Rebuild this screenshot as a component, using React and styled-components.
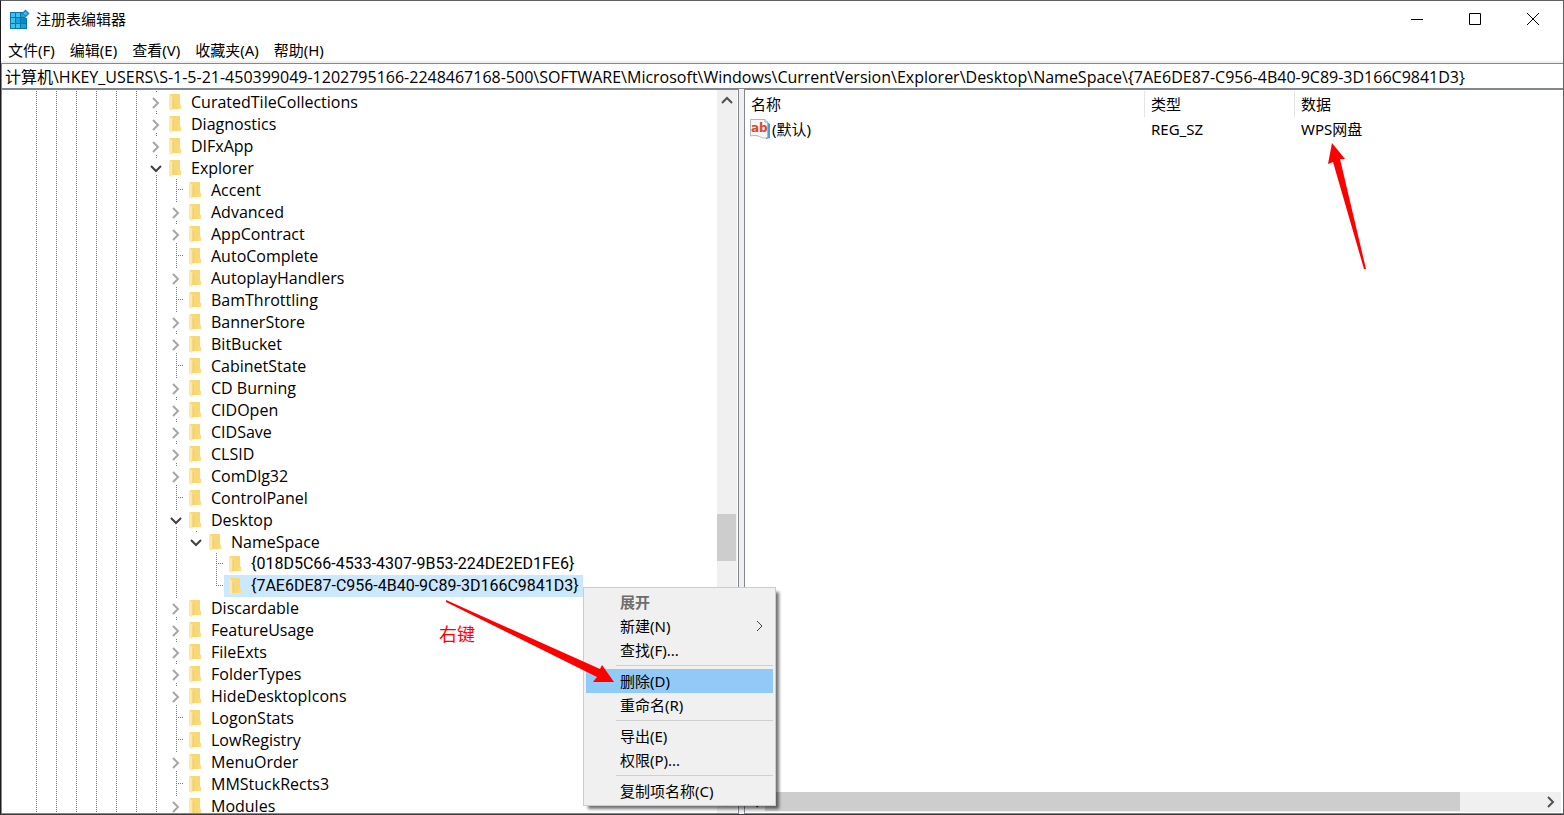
import React from "react";
import styled, { createGlobalStyle, css } from "styled-components";

const GlobalStyle = createGlobalStyle`
  * { box-sizing: border-box; }
  html, body { margin: 0; }
  body, button, input, table {
    font-family: "Noto Sans", "Noto Sans CJK SC", sans-serif;
    font-size: 15px;
    line-height: 22px;
    color: #000;
  }
  button, input { border: 0; padding: 0; margin: 0; background: none; outline: none; }
`;

const Window = styled.div`
  position: relative;
  display: flex;
  flex-direction: column;
  height: 100vh;
  overflow: hidden;
  background: #fff;
  border: 1px solid #606065;
  border-left-color: #1c1a1f;
  border-bottom-color: #3c3c40;
`;

const TitleBar = styled.header`
  display: flex;
  align-items: center;
  flex: none;
  height: 37px;
  padding: 0 1px 2px 8px;
`;

const Title = styled.h1`
  flex: 1;
  margin: 0 0 0 6px;
  font-size: 15px;
  font-weight: 400;
`;

const CaptionButton = styled.button`
  display: flex;
  align-items: center;
  justify-content: center;
  width: 58px;
  height: 35px;
`;

const MenuBar = styled.nav`
  display: flex;
  gap: 15px;
  flex: none;
  height: 25px;
  padding: 1px 7px 0;
  border-bottom: 2px solid #f0f0f0;
`;

const AddressInput = styled.input`
  flex: none;
  width: 100%;
  height: 26px;
  padding: 0 3px 1px;
  font-family: "Open Sans", "Noto Sans CJK SC", sans-serif;
  font-size: 16px;
  border: 1px solid #828790;
  border-right: 0;
`;

const Panes = styled.main`
  display: flex;
  flex: 1;
  min-height: 0;
  background: #f0f0f0;
`;

const Pane = styled.section`
  display: flex;
  min-width: 0;
  min-height: 0;
  background: #fff;
  border: 1px solid #828790;
`;

const TreePane = styled(Pane)`
  flex: 0 0 738px;
  padding-right: 1px;
  margin-right: 5px;
`;

const ListPane = styled(Pane)`
  flex: 1;
  flex-direction: column;
  padding: 1px 2px 1px 0;
  border-right: 0;
`;

const Tree = styled.ul`
  flex: 1;
  min-width: 0;
  margin: 0;
  padding: 1px 0 0 22px;
  overflow: hidden;
  list-style: none;
`;

const TreeRow = styled.li`
  display: flex;
  height: 22px;
`;

const dotsDown = "repeating-linear-gradient(to bottom, #777 0 1px, transparent 1px 2px)";
const dotsAcross = "repeating-linear-gradient(to right, #777 0 1px, transparent 1px 2px)";

const guides = {
  none: css``,
  line: css`
    background: ${dotsDown} 12px 0 / 1px 22px no-repeat;
  `,
  leaf: css`
    background: ${dotsDown} 12px 0 / 1px 22px no-repeat, ${dotsAcross} 14px 10px / 6px 1px no-repeat;
  `,
  last: css`
    background: ${dotsDown} 12px 0 / 1px 11px no-repeat, ${dotsAcross} 14px 10px / 6px 1px no-repeat;
  `,
  closed: css`
    background: ${dotsDown} 12px 0 / 1px 2px no-repeat, ${dotsDown} 12px 20px / 1px 2px no-repeat;
  `,
  open: css`
    background: ${dotsDown} 12px 0 / 1px 2px no-repeat, ${dotsDown} 12px 18px / 1px 4px no-repeat;
  `,
  openLast: css`
    background: ${dotsDown} 12px 0 / 1px 2px no-repeat;
  `,
};

const Guide = styled.span`
  flex: none;
  width: 20px;
  height: 22px;
  ${(p) => guides[p.$kind]}
`;

const Expander = styled.button`
  display: flex;
  align-items: center;
  justify-content: center;
  width: 20px;
  height: 22px;
  padding: 1px 0 0 4px;
`;

const NodeButton = styled.button`
  display: flex;
  align-items: center;
  gap: 10px;
  height: 22px;
  padding: 0 4px 0 5px;
  font-family: ${(p) => (p.$classId ? "Roboto" : '"Open Sans"')}, "Noto Sans CJK SC", sans-serif;
  font-size: 16px;
  white-space: nowrap;
  background: ${(p) => (p.$selected ? "#cce8ff" : "transparent")};
`;

const ScrollBar = styled.div`
  display: flex;
  flex: none;
  flex-direction: ${(p) => (p.$vertical ? "column" : "row")};
  ${(p) => (p.$vertical ? "width" : "height")}: 20px;
  background: #f0f0f0;
`;

const ScrollTrack = styled.div`
  display: flex;
  flex: 1;
  min-height: 0;
  flex-direction: inherit;
`;

const Spacer = styled.div`
  flex: ${(p) => p.$grow};
`;

const VThumb = styled.div`
  height: 47px;
  margin-right: 1px;
  background: #cdcdcd;
`;

const HThumb = styled.div`
  flex: 696;
  margin-bottom: 1px;
  background: #cdcdcd;
`;

const ScrollButton = styled.button`
  display: flex;
  flex: none;
  align-items: center;
  justify-content: center;
  width: 20px;
  height: 20px;
`;

const ListArea = styled.div`
  flex: 1;
  min-height: 0;
`;

const ValueTable = styled.table`
  width: 100%;
  table-layout: fixed;
  border-collapse: separate;
  border-spacing: 0;
`;

const HeadCell = styled.th`
  width: ${(p) => p.$width || "auto"};
  height: 26px;
  padding: 0 6px;
  font-weight: 400;
  text-align: left;
  border-right: ${(p) => (p.$width ? "1px solid #e5e5e5" : "0")};
`;

const Cell = styled.td`
  height: 24px;
  padding: 0 6px;
`;

const NameCell = styled(Cell)`
  padding: 0 5px;
`;

const ValueName = styled.span`
  display: flex;
  align-items: center;
  gap: 2px;
`;

const ContextMenu = styled.div`
  position: absolute;
  top: 586px;
  left: 582px;
  width: 193px;
  padding: 2px;
  background: #f0f0f0;
  border: 1px solid #ccc;
  box-shadow: 4px 4px 3px -1px rgba(0, 0, 0, 0.55);
`;

const MenuItem = styled.button`
  display: flex;
  align-items: center;
  justify-content: space-between;
  width: 100%;
  height: 24px;
  padding: 0 9px 1px 34px;
  font-weight: ${(p) => (p.disabled ? 700 : 400)};
  color: ${(p) => (p.disabled ? "#6d6d6d" : "#000")};
  background: ${(p) => (p.$active ? "#91c9f7" : "transparent")};
`;

const Separator = styled.hr`
  height: 1px;
  margin: 3px 0 3px 30px;
  border: 0;
  background: #d0d0d0;
`;

const Annotations = styled.svg`
  position: absolute;
  top: 0;
  left: 0;
  pointer-events: none;
`;

const Note = styled.span`
  position: absolute;
  top: 621px;
  left: 438px;
  font-size: 18px;
  line-height: 24px;
  color: #f00;
`;

const RegistryIcon = () => (
  <svg width="21" height="20" viewBox="0 0 21 20" aria-hidden="true">
    <path d="M1 3h17v17H1z" fill="#0a76a8" />
    <path d="M2 4h4v4H2zM7 4h4v4H7zM2 9h4v5H2zM2 15h4v4H2zM7 15h4v4H7z" fill="#3fc1f0" />
    <path d="M12 4h3v4h-3zM7 9h4v5H7zM12 15h5v4h-5z" fill="#17a2de" />
    <path d="M12 9h5v5h-5z" fill="#0d88c0" />
    <path d="M14 2h6v7h-3l-3-3z" fill="#fff" />
    <path d="M16.500 .5l4 4-4 4-4-4z" fill="#1787bd" />
    <path d="M16.500 2.500l2 2-2 2-2-2z" fill="#4fbce6" />
  </svg>
);

const FolderIcon = () => (
  <svg width="12" height="17" viewBox="0 0 12 17" aria-hidden="true">
    <path d="M1 0h10v10l1 2v3H2z" fill="#f8d775" />
    <path d="M9 11h3v4H9z" fill="#fbdc83" />
    <path d="M0 0l3 2.500 1 2V15l-1 2-3-1.500z" fill="#ffe8a6" />
    <path d="M4 4v11" stroke="#edc95f" />
  </svg>
);

const StringIcon = () => (
  <svg width="20" height="20" viewBox="0 0 20 20" aria-hidden="true">
    <path d="M16 2l4 3v14l-4 1z" fill="#4a9fd8" />
    <path d="M.5.500H15l2.500 2.500v15c-3 2-5 1-8-.5s-6-1-9-.5z" fill="#f5f5f5" stroke="#b5b5b5" />
    <path d="M15 .5V3h2.500" fill="#fff" stroke="#9aa5ad" />
    <text x="1" y="13" fontFamily="DejaVu Sans" fontWeight="700" fontSize="12" fill="#db4b2d">ab</text>
  </svg>
);

const chevrons = {
  right: { w: 8, h: 12, d: "M1 1l5 5-5 5" },
  down: { w: 12, h: 8, d: "M1 1l5 5 5-5" },
  up: { w: 12, h: 8, d: "M1 7l5-5 5 5" },
  left: { w: 8, h: 12, d: "M7 1L2 6l5 5" },
};

const Chevron = ({ dir, color, weight = 2 }) => {
  const c = chevrons[dir];
  return (
    <svg width={c.w} height={c.h} viewBox={`0 0 ${c.w} ${c.h}`} aria-hidden="true">
      <path d={c.d} fill="none" stroke={color} strokeWidth={weight} />
    </svg>
  );
};

const lines = (n) => Array(n).fill("line");

const explorerKeys = (entries) =>
  entries.map(([name, kind]) => ({ name, kind, guides: lines(7) }));

const nodes = [
  { name: "CuratedTileCollections", guides: lines(6), kind: "closed" },
  { name: "Diagnostics", guides: lines(6), kind: "closed" },
  { name: "DIFxApp", guides: lines(6), kind: "closed" },
  { name: "Explorer", guides: lines(6), kind: "open" },
  ...explorerKeys([
    ["Accent", "leaf"],
    ["Advanced", "closed"],
    ["AppContract", "closed"],
    ["AutoComplete", "leaf"],
    ["AutoplayHandlers", "closed"],
    ["BamThrottling", "leaf"],
    ["BannerStore", "closed"],
    ["BitBucket", "closed"],
    ["CabinetState", "leaf"],
    ["CD Burning", "closed"],
    ["CIDOpen", "closed"],
    ["CIDSave", "closed"],
    ["CLSID", "closed"],
    ["ComDlg32", "closed"],
    ["ControlPanel", "leaf"],
    ["Desktop", "open"],
  ]),
  { name: "NameSpace", guides: lines(8), kind: "openLast" },
  { name: "{018D5C66-4533-4307-9B53-224DE2ED1FE6}", guides: [...lines(8), "none"], kind: "leaf", classId: true },
  {
    name: "{7AE6DE87-C956-4B40-9C89-3D166C9841D3}",
    guides: [...lines(8), "none"],
    kind: "last",
    classId: true,
    selected: true,
  },
  ...explorerKeys([
    ["Discardable", "closed"],
    ["FeatureUsage", "closed"],
    ["FileExts", "closed"],
    ["FolderTypes", "closed"],
    ["HideDesktopIcons", "closed"],
    ["LogonStats", "leaf"],
    ["LowRegistry", "leaf"],
    ["MenuOrder", "closed"],
    ["MMStuckRects3", "leaf"],
    ["Modules", "closed"],
  ]),
];

const TreeNode = ({ node }) => {
  const opened = node.kind.startsWith("open");
  const expandable = opened || node.kind === "closed";
  return (
    <TreeRow role="treeitem" aria-selected={!!node.selected} aria-expanded={expandable ? opened : undefined}>
      {node.guides.map((kind, i) => (
        <Guide key={i} $kind={kind} />
      ))}
      <Guide $kind={node.kind}>
        {expandable && (
          <Expander aria-label={`${opened ? "折叠" : "展开"} ${node.name}`}>
            <Chevron dir={opened ? "down" : "right"} color={opened ? "#404040" : "#a6a6a6"} />
          </Expander>
        )}
      </Guide>
      <NodeButton $selected={node.selected} $classId={node.classId}>
        <FolderIcon />
        {node.name}
      </NodeButton>
    </TreeRow>
  );
};

const path =
  "计算机\\HKEY_USERS\\S-1-5-21-450399049-1202795166-2248467168-500\\SOFTWARE\\Microsoft\\Windows\\CurrentVersion\\Explorer\\Desktop\\NameSpace\\{7AE6DE87-C956-4B40-9C89-3D166C9841D3}";

export default function App() {
  return (
    <>
      <GlobalStyle />
      <Window>
        <TitleBar>
          <RegistryIcon />
          <Title>注册表编辑器</Title>
          <CaptionButton aria-label="最小化">
            <svg width="12" height="12"><path d="M0 6.500h12" stroke="#000" /></svg>
          </CaptionButton>
          <CaptionButton aria-label="最大化">
            <svg width="12" height="12"><path d="M.5.500h11v11H.500z" fill="none" stroke="#000" /></svg>
          </CaptionButton>
          <CaptionButton aria-label="关闭">
            <svg width="12" height="12"><path d="M0 0l12 12M12 0L0 12" stroke="#000" /></svg>
          </CaptionButton>
        </TitleBar>
        <MenuBar>
          {["文件(F)", "编辑(E)", "查看(V)", "收藏夹(A)", "帮助(H)"].map((m) => (
            <button key={m}>{m}</button>
          ))}
        </MenuBar>
        <AddressInput aria-label="地址" defaultValue={path} spellCheck={false} />
        <Panes>
          <TreePane>
            <Tree role="tree">
              {nodes.map((n) => (
                <TreeNode key={n.name} node={n} />
              ))}
            </Tree>
            <ScrollBar $vertical>
              <ScrollButton aria-label="向上滚动"><Chevron dir="up" color="#505050" /></ScrollButton>
              <ScrollTrack>
                <Spacer $grow={403} />
                <VThumb />
                <Spacer $grow={232} />
              </ScrollTrack>
              <ScrollButton aria-label="向下滚动"><Chevron dir="down" color="#505050" /></ScrollButton>
            </ScrollBar>
          </TreePane>
          <ListPane>
            <ListArea>
              <ValueTable>
                <thead>
                  <tr>
                    <HeadCell $width="400px">名称</HeadCell>
                    <HeadCell $width="150px">类型</HeadCell>
                    <HeadCell>数据</HeadCell>
                  </tr>
                </thead>
                <tbody>
                  <tr>
                    <NameCell><ValueName><StringIcon />(默认)</ValueName></NameCell>
                    <Cell>REG_SZ</Cell>
                    <Cell>WPS网盘</Cell>
                  </tr>
                </tbody>
              </ValueTable>
            </ListArea>
            <ScrollBar>
              <ScrollButton aria-label="向左滚动"><Chevron dir="left" color="#505050" /></ScrollButton>
              <ScrollTrack>
                <HThumb />
                <Spacer $grow={81} />
              </ScrollTrack>
              <ScrollButton aria-label="向右滚动"><Chevron dir="right" color="#505050" /></ScrollButton>
            </ScrollBar>
          </ListPane>
        </Panes>
        <ContextMenu role="menu">
          <MenuItem role="menuitem" disabled>展开</MenuItem>
          <MenuItem role="menuitem">新建(N)<Chevron dir="right" color="#404040" weight={1} /></MenuItem>
          <MenuItem role="menuitem">查找(F)...</MenuItem>
          <Separator />
          <MenuItem role="menuitem" $active>删除(D)</MenuItem>
          <MenuItem role="menuitem">重命名(R)</MenuItem>
          <Separator />
          <MenuItem role="menuitem">导出(E)</MenuItem>
          <MenuItem role="menuitem">权限(P)...</MenuItem>
          <Separator />
          <MenuItem role="menuitem">复制项名称(C)</MenuItem>
        </ContextMenu>
        <Note>右键</Note>
        <Annotations width="1380" height="700" aria-hidden="true">
          <path d="M445 599L599 668L601 664L613 681L592 681L596 676L445 601z" fill="#f00" />
          <path d="M1331 142L1344 158L1339 158L1365 268L1363 268L1332 161L1327 163z" fill="#f00" />
        </Annotations>
      </Window>
    </>
  );
}
